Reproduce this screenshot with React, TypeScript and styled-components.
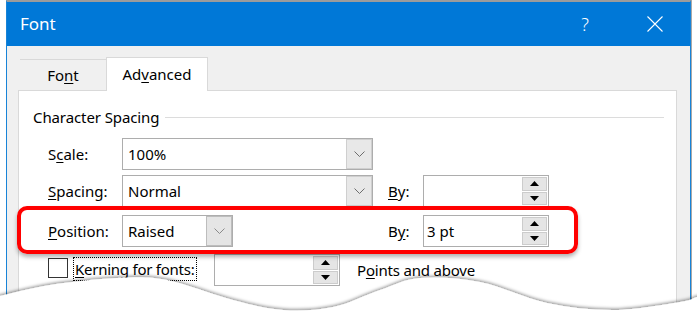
import * as React from 'react';
import styled, { createGlobalStyle } from 'styled-components';

const GlobalStyle = createGlobalStyle`
    html, body {
        margin: 0;
        padding: 0;
        background: #fff;
    }
    body {
        font-family: "Noto Sans", "Open Sans", sans-serif;
        font-size: 15px;
        color: #000;
    }
    u {
        text-decoration: underline;
        text-underline-offset: 2px;
    }
`;

const Stage = styled.div`
    position: relative;
    width: 697px;
    height: 322px;
    overflow: hidden;
    padding-left: 6px;
    box-sizing: border-box;
    background: #fff;
`;

const Window = styled.div`
    width: 685px;
    height: 340px;
    box-sizing: border-box;
    border: 1px solid #1883d7;
    border-top: 2px solid #9b9b9b;
    box-shadow: 1px 0 0 #a9a9a9;
    background: #f0f0f0;
    display: flex;
    flex-direction: column;
`;

const TitleBar = styled.div`
    height: 44px;
    flex: 0 0 44px;
    background: #0078d7;
    color: #fff;
    display: flex;
    align-items: center;
`;

const Title = styled.div`
    flex: 1 1 auto;
    padding-left: 13px;
    font-size: 17px;
    line-height: 1;
    margin-top: -1px;
`;

const CaptionButton = styled.div`
    width: 70px;
    height: 100%;
    display: flex;
    align-items: center;
    justify-content: center;
    font-size: 18px;
    font-weight: 300;
    color: #fff;
`;

const Client = styled.div`
    flex: 1 1 auto;
    padding: 11px 13px 0 11px;
    display: flex;
    flex-direction: column;
`;

const TabBar = styled.div`
    display: flex;
    align-items: flex-end;
    padding-left: 2px;
    height: 33px;
`;

const Tab = styled.div<{ $active?: boolean }>`
    position: relative;
    z-index: 1;
    box-sizing: border-box;
    display: flex;
    align-items: center;
    justify-content: center;
    width: ${p => (p.$active ? '102px' : '86px')};
    height: ${p => (p.$active ? '34px' : '31px')};
    margin-bottom: ${p => (p.$active ? '-1px' : '0')};
    padding-bottom: ${p => (p.$active ? '1px' : '0')};
    background: ${p => (p.$active ? '#fff' : 'transparent')};
    border-top: 1px solid #d9d9d9;
    border-left: ${p => (p.$active ? '1px solid #d9d9d9' : 'none')};
    border-right: ${p => (p.$active ? '1px solid #d9d9d9' : 'none')};
`;

const Panel = styled.div`
    flex: 1 1 auto;
    background: #fff;
    border: 1px solid #d9d9d9;
    display: flex;
    flex-direction: column;
`;

const GroupHeader = styled.div`
    display: flex;
    align-items: center;
    height: 20px;
    margin-top: 16px;
    padding: 0 12px 0 14px;
    gap: 6px;
    white-space: nowrap;
    letter-spacing: -0.1px;

    &::after {
        content: '';
        flex: 1 1 auto;
        height: 1px;
        background: #dcdcdc;
    }
`;

const Row = styled.div<{ $gap?: number }>`
    display: flex;
    align-items: center;
    height: 32px;
    margin-top: ${p => p.$gap ?? 0}px;
    padding-left: 29px;
`;

const Highlight = styled.div`
    display: flex;
    align-items: center;
    box-sizing: border-box;
    width: 561px;
    height: 48px;
    margin: -1px 0 0 -2px;
    padding: 2px 0 0 27px;
    border: 4px solid #ff0000;
    border-radius: 10px;
    box-shadow: 0 3px 4px rgba(0, 0, 0, 0.3);
    position: relative;
    z-index: 1;
`;

const Label = styled.div`
    width: 74px;
    white-space: nowrap;
`;

const FieldSlot = styled.div`
    width: 251px;
    display: flex;
`;

const ByLabel = styled.div`
    width: 35px;
    margin-left: 15px;
`;

const Combo = styled.div<{ $width: number }>`
    width: ${p => p.$width}px;
    height: 32px;
    box-sizing: border-box;
    border: 1px solid #adadad;
    background: #fff;
    display: flex;
    align-items: stretch;
`;

const ComboText = styled.div`
    flex: 1 1 auto;
    padding-left: 5px;
    display: flex;
    align-items: center;
`;

const DropButton = styled.div<{ $hot?: boolean }>`
    width: 26px;
    box-sizing: border-box;
    border: 1px solid ${p => (p.$hot ? '#bdbdbd' : '#cfcfcf')};
    margin: 0;
    background: ${p => (p.$hot ? '#e5e5e5' : '#e8e8e8')};
    display: flex;
    align-items: center;
    justify-content: center;
`;

const Spin = styled.div<{ $gap?: number }>`
    width: 126px;
    height: 32px;
    box-sizing: border-box;
    border: 1px solid #adadad;
    background: #fff;
    display: flex;
    align-items: stretch;
    margin-left: ${p => p.$gap ?? 0}px;
`;

const SpinText = styled.div`
    flex: 1 1 auto;
    padding-left: 3px;
    display: flex;
    align-items: center;
`;

const SpinButtons = styled.div`
    width: 25px;
    padding: 1px 1px 1px 0;
    display: flex;
    flex-direction: column;
    gap: 1px;
`;

const SpinButton = styled.div`
    flex: 1 1 0;
    box-sizing: border-box;
    border: 1px solid #cccccc;
    background: #e5e5e5;
    display: flex;
    align-items: center;
    justify-content: center;
`;

const KerningRow = styled.div`
    display: flex;
    align-items: flex-start;
    height: 40px;
    padding-left: 29px;
`;

const CheckBox = styled.div`
    width: 20px;
    height: 20px;
    box-sizing: border-box;
    border: 1px solid #333;
    background: #fff;
    margin-top: 4px;
`;

const FocusLabel = styled.div`
    margin: 3px 0 0 5px;
    width: 124px;
    padding: 0 0 0 1px;
    height: 24px;
    box-sizing: border-box;
    border: 1px dotted #000;
    display: flex;
    align-items: center;
    white-space: nowrap;
    overflow: hidden;
    letter-spacing: -0.25px;
`;

const TrailText = styled.div`
    margin: 4px 0 0 17px;
    height: 24px;
    display: flex;
    align-items: center;
    letter-spacing: -0.2px;
`;

const TornEdge = styled.svg`
    position: absolute;
    left: 0;
    top: 262px;
    z-index: 5;
`;

const Chevron = ({ color }: { color: string }) => (
    <svg width="11" height="6" viewBox="0 0 11 6">
        <path d="M0.5 0.5 L5.5 5.5 L10.5 0.5" fill="none" stroke={color} strokeWidth="1" />
    </svg>
);

const Arrow = ({ down }: { down?: boolean }) => (
    <svg width="9" height="5" viewBox="0 0 9 5">
        <path d={down ? 'M0 0 L9 0 L4.5 5 Z' : 'M0 5 L9 5 L4.5 0 Z'} fill="#000" />
    </svg>
);

const SpinBox = ({ value, gap }: { value?: string; gap?: number }) => (
    <Spin $gap={gap}>
        <SpinText>{value}</SpinText>
        <SpinButtons>
            <SpinButton><Arrow /></SpinButton>
            <SpinButton><Arrow down /></SpinButton>
        </SpinButtons>
    </Spin>
);

// wave of the torn paper edge, in svg coordinates (top = 262)
const WAVE: [number, number][] = [
    [-10, 36], [0, 34], [50, 23], [117, 16], [167, 18], [233, 38], [283, 48], [333, 45],
    [380, 28], [420, 16], [480, 20], [547, 41], [614, 48], [680, 40], [697, 35], [710, 32],
];

const wavePath = () => {
    let d = `M${WAVE[0][0]} ${WAVE[0][1]}`;
    for (let i = 0; i < WAVE.length - 1; i++) {
        const p0 = WAVE[Math.max(i - 1, 0)];
        const p1 = WAVE[i];
        const p2 = WAVE[i + 1];
        const p3 = WAVE[Math.min(i + 2, WAVE.length - 1)];
        const c1x = p1[0] + (p2[0] - p0[0]) / 6;
        const c1y = p1[1] + (p2[1] - p0[1]) / 6;
        const c2x = p2[0] - (p3[0] - p1[0]) / 6;
        const c2y = p2[1] - (p3[1] - p1[1]) / 6;
        d += ` C${c1x.toFixed(1)} ${c1y.toFixed(1)} ${c2x.toFixed(1)} ${c2y.toFixed(1)} ${p2[0]} ${p2[1]}`;
    }
    return d + ' L710 70 L-10 70 Z';
};

export default function App() {
    return (
        <Stage>
            <GlobalStyle />
            <Window>
                <TitleBar>
                    <Title>Font</Title>
                    <CaptionButton>?</CaptionButton>
                    <CaptionButton>
                        <svg width="16" height="16" viewBox="0 0 16 16">
                            <path d="M0.5 0.5 L15.5 15.5 M15.5 0.5 L0.5 15.5" stroke="#fff" strokeWidth="1.1" />
                        </svg>
                    </CaptionButton>
                </TitleBar>
                <Client>
                    <TabBar>
                        <Tab>Fo<u>n</u>t</Tab>
                        <Tab $active>Ad<u>v</u>anced</Tab>
                    </TabBar>
                    <Panel>
                        <GroupHeader>Character Spacing</GroupHeader>
                        <Row $gap={11}>
                            <Label>S<u>c</u>ale:</Label>
                            <FieldSlot>
                                <Combo $width={251}>
                                    <ComboText>100%</ComboText>
                                    <DropButton><Chevron color="#6d6d6d" /></DropButton>
                                </Combo>
                            </FieldSlot>
                        </Row>
                        <Row $gap={5}>
                            <Label><u>S</u>pacing:</Label>
                            <FieldSlot>
                                <Combo $width={251}>
                                    <ComboText>Normal</ComboText>
                                    <DropButton><Chevron color="#6d6d6d" /></DropButton>
                                </Combo>
                            </FieldSlot>
                            <ByLabel><u>B</u>y:</ByLabel>
                            <SpinBox />
                        </Row>
                        <Highlight>
                            <Label><u>P</u>osition:</Label>
                            <FieldSlot>
                                <Combo $width={111}>
                                    <ComboText>Raised</ComboText>
                                    <DropButton $hot><Chevron color="#8a8a8a" /></DropButton>
                                </Combo>
                            </FieldSlot>
                            <ByLabel>B<u>y</u>:</ByLabel>
                            <SpinBox value="3 pt" />
                        </Highlight>
                        <KerningRow>
                            <CheckBox />
                            <FocusLabel><u>K</u>erning for fonts:</FocusLabel>
                            <SpinBox gap={17} />
                            <TrailText>P<u>o</u>ints and above</TrailText>
                        </KerningRow>
                    </Panel>
                </Client>
            </Window>
            <TornEdge width="697" height="60" viewBox="0 0 697 60">
                <defs>
                    <filter id="edgeShadow" x="-5%" y="-50%" width="110%" height="200%">
                        <feDropShadow dx="0" dy="-1.5" stdDeviation="1.6" floodColor="#000" floodOpacity="0.4" />
                    </filter>
                </defs>
                <path d={wavePath()} fill="#fff" filter="url(#edgeShadow)" />
            </TornEdge>
        </Stage>
    );
}
